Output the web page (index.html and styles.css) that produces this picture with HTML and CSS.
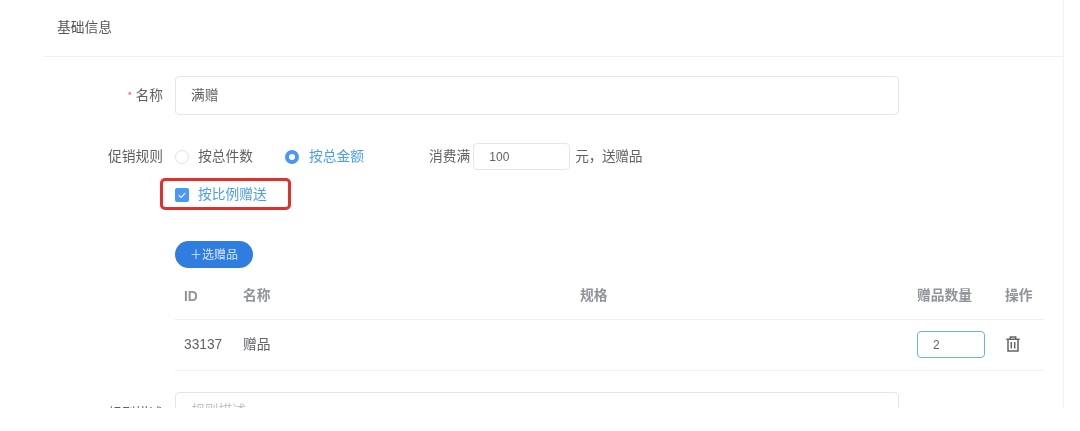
FILE: index.html
```html
<!DOCTYPE html>
<html lang="zh-CN">
<head>
    <meta charset="UTF-8">
    <title>基础信息</title>
    <link rel="stylesheet" href="styles.css">
</head>
<body>
    <div class="panel">
        <div class="panel-header">基础信息</div>

        <div class="panel-body">
            <div class="form-row row-name">
                <label class="form-label"><span class="required">*</span> 名称</label>
                <input class="text-input name-input" type="text" value="满赠">
            </div>

            <div class="form-row row-rule">
                <label class="form-label">促销规则</label>
                <div class="rule-options">
                    <span class="radio"></span>
                    <span class="option-text">按总件数</span>
                    <span class="radio radio-checked"></span>
                    <span class="option-text option-active">按总金额</span>
                    <span class="spend-label">消费满</span>
                    <input class="text-input spend-input" type="text" value="100">
                    <span class="spend-suffix">元，送赠品</span>
                </div>
            </div>

            <div class="form-row row-check">
                <span class="form-label"></span>
                <div class="check-option">
                    <span class="checkbox">
                        <svg width="12" height="12" viewBox="0 0 12 12"><path d="M2.8 6.2l2.3 2.2L9.2 4" fill="none" stroke="#e8f1fd" stroke-width="1.2"/></svg>
                    </span>
                    <span class="check-text option-active">按比例赠送</span>
                    <span class="mark-box"></span>
                </div>
            </div>

            <div class="gift-block">
                <button class="add-btn" type="button">＋选赠品</button>
                <table class="gift-table">
                    <thead>
                        <tr>
                            <th class="col-id">ID</th>
                            <th class="col-name">名称</th>
                            <th class="col-spec">规格</th>
                            <th class="col-qty">赠品数量</th>
                            <th class="col-op">操作</th>
                        </tr>
                    </thead>
                    <tbody>
                        <tr>
                            <td class="col-id">33137</td>
                            <td class="col-name">赠品</td>
                            <td class="col-spec"></td>
                            <td class="col-qty"><input class="qty-input" type="text" value="2"></td>
                            <td class="col-op">
                                <svg class="trash" width="14" height="16" viewBox="0 0 14 16" fill="none" stroke="#666" stroke-width="1.5">
                                    <path d="M0.3 3.2h13.4M4.3 3.2V0.9h5.4v2.3M2 3.2v11.9h10V3.2M5.3 6v6.4M8.7 6v6.4"/>
                                </svg>
                            </td>
                        </tr>
                    </tbody>
                </table>
            </div>

            <div class="form-row row-desc">
                <label class="form-label">规则描述</label>
                <textarea class="text-input desc-input" placeholder="规则描述"></textarea>
            </div>
        </div>
    </div>
</body>
</html>
```

FILE: styles.css
```css
* {
    margin: 0;
    padding: 0;
    box-sizing: border-box;
}

body {
    background: #fff;
    font-family: "Noto Sans CJK SC", sans-serif;
    font-size: 13.75px;
    color: #606266;
}

.panel {
    width: 1021px;
    height: 408px;
    margin-left: 43px;
    border-right: 1px solid #f0f2f7;
    overflow: hidden;
    filter: blur(0.35px);
}

.panel-header {
    height: 57px;
    padding: 18px 0 0 14px;
    line-height: 17px;
    color: #555;
    border-bottom: 1px solid #eff1f5;
}

.form-row {
    display: flex;
    align-items: center;
}

.form-label {
    width: 120px;
    padding-bottom: 4px;
    text-align: right;
    flex-shrink: 0;
    margin-right: 12px;
}

.required {
    color: #f56c6c;
    font-size: 11px;
}

.text-input {
    border: 1px solid #e2e5ee;
    border-radius: 4px;
    font: inherit;
    color: #606266;
    outline: none;
}

.row-name {
    margin-top: 19px;
}

.name-input {
    width: 724px;
    height: 39px;
    padding: 0 0 4px 15px;
}

.row-rule {
    margin-top: 28px;
}

.rule-options {
    display: flex;
    align-items: center;
}

.radio {
    width: 14px;
    height: 14px;
    border: 1px solid #dcdfe6;
    border-radius: 50%;
    margin-right: 9px;
}

.radio-checked {
    margin-left: 32px;
    border: 4.5px solid #4a97f5;
    background: #fff;
    margin-right: 10px;
}

.option-text {
    padding-bottom: 4px;
}

.option-active {
    color: #4a9cf6;
}

.spend-label {
    margin-left: 65px;
    margin-right: 3px;
    padding-bottom: 4px;
}

.spend-input {
    width: 97px;
    height: 27px;
    padding-left: 15px;
    font-family: "Liberation Sans", sans-serif;
    font-size: 12px;
}

.spend-suffix {
    margin-left: 5px;
    padding-bottom: 4px;
    letter-spacing: -0.4px;
}

.row-check {
    margin-top: 14px;
}

.check-option {
    position: relative;
    display: flex;
    align-items: center;
    height: 20px;
}

.checkbox {
    display: flex;
    align-items: center;
    justify-content: center;
    width: 14px;
    height: 14px;
    margin-top: 2px;
    border-radius: 2px;
    background: #4a97f5;
    margin-right: 9px;
}

.check-text {
    padding-bottom: 2px;
}

/* red annotation drawn on top of the screenshot */
.mark-box {
    position: absolute;
    left: -15px;
    top: -6px;
    width: 131px;
    height: 32px;
    border: 3px solid #e3302a;
    border-radius: 5px;
}

.gift-block {
    margin: 37px 0 0 132px;
    width: 869px;
}

.add-btn {
    display: block;
    width: 78px;
    height: 27px;
    padding-bottom: 2px;
    border: none;
    border-radius: 14px;
    background: #2f7de1;
    color: #d5e5fa;
    font: inherit;
    font-size: 12px;
}

.gift-table {
    width: 100%;
    border-collapse: collapse;
    table-layout: fixed;
}

.gift-table th {
    height: 51px;
    padding-top: 2px;
    font-weight: bold;
    color: #909399;
    text-align: left;
    border-bottom: 1px solid #eff1f5;
}

.gift-table td {
    height: 51px;
    padding-bottom: 3px;
    border-bottom: 1px solid #eff1f5;
}

.gift-table th.col-id {
    padding-top: 7px;
}

.gift-table td.col-id {
    padding: 0 0 0 9px;
}

.gift-table td.col-qty,
.gift-table td.col-op {
    padding-bottom: 0;
}

.col-id {
    width: 68px;
    padding-left: 9px;
    font-family: "Liberation Sans", sans-serif;
}

.col-name {
    width: 337px;
}

.col-qty {
    width: 88px;
}

.col-op {
    width: 39px;
}

.qty-input {
    display: block;
    width: 68px;
    height: 27px;
    padding-left: 15px;
    border: 1.5px solid #6aaef7;
    border-radius: 4px;
    font-family: "Liberation Sans", sans-serif;
    font-size: 12px;
    color: #606266;
    outline: none;
}

.trash {
    display: block;
    margin: -2px 0 0 1px;
}

.row-desc {
    margin-top: 21px;
    align-items: flex-start;
}

.row-desc .form-label {
    padding: 10px 0 0;
}

.desc-input {
    width: 724px;
    height: 60px;
    padding: 6px 15px;
    resize: none;
}

.desc-input::placeholder {
    color: #c0c4cc;
}
```
